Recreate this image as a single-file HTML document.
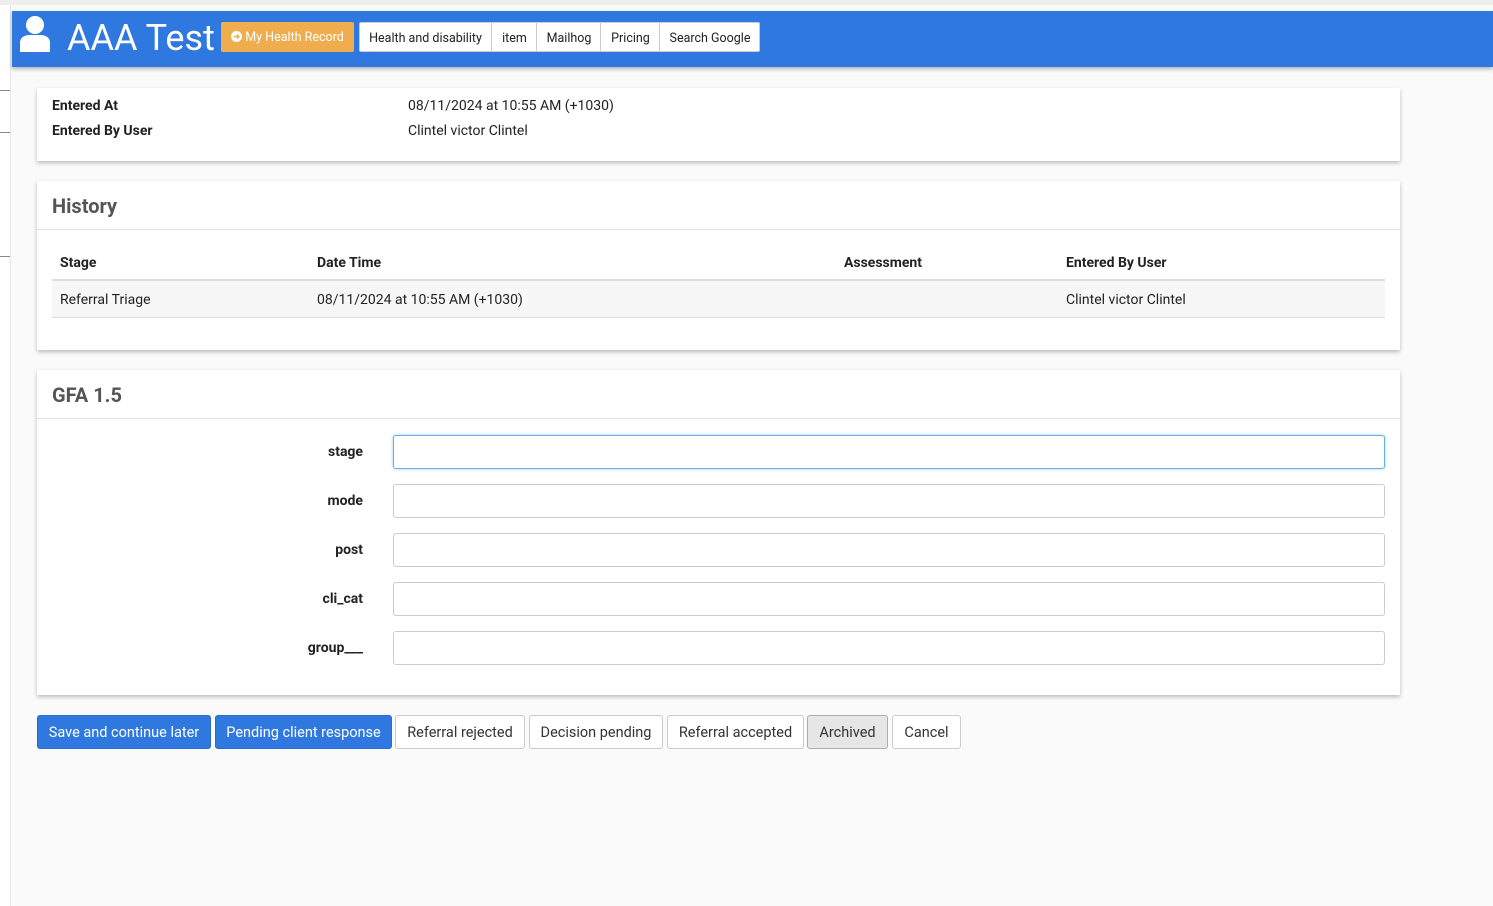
<!DOCTYPE html>
<html><head><meta charset="utf-8"><style>
*{box-sizing:border-box;margin:0;padding:0}
body{width:1493px;height:906px;background:#fafafa;font-family:"Roboto","Liberation Sans",sans-serif;color:#222;position:relative;overflow:hidden;font-size:14px}
.a{position:absolute}
.card{position:absolute;left:37px;width:1363px;background:#fff;box-shadow:0 2px 4px rgba(0,0,0,.25)}
.ttl{position:absolute;left:15px;font-size:20px;font-weight:bold;color:#555}
.hr{position:absolute;left:0;right:0;height:1px;background:#e0e0e0}
.lbl{position:absolute;width:120px;text-align:right;font-weight:bold;font-size:14px}
.inp{position:absolute;left:356px;width:992px;height:34px;border:1px solid #ccc;border-radius:3px;background:#fff}
.btn{position:absolute;top:715px;height:34px;border:1px solid #ccc;border-radius:3px;background:#fff;font-size:14.5px;line-height:34px;text-align:center;color:#333}
.nav{position:absolute;top:22px;height:30px;line-height:33px;font-size:12.5px;color:#222;text-align:center;border-left:1px solid #ccc}
</style></head><body>
<div class="a" style="left:0;top:0;width:1493px;height:5px;background:#eee"></div>
<div class="a" style="left:0;top:5px;width:11px;height:901px;background:#fff;border-right:1px solid #e6e6e6"></div>
<div class="a" style="left:0;top:90px;width:10px;height:1px;background:#888"></div>
<div class="a" style="left:0;top:132px;width:10px;height:1px;background:#888"></div>
<div class="a" style="left:0;top:256px;width:10px;height:1px;background:#888"></div>
<div class="a" style="left:12px;top:67px;width:1481px;height:21px;background:#fafafa"></div>
<div class="a" style="left:12px;top:11px;width:1481px;height:56px;background:#2f78e0;box-shadow:0 2px 4px rgba(0,0,0,.3)"></div>
<svg class="a" style="left:18px;top:15px" width="34" height="38" viewBox="0 0 34 38"><circle cx="17" cy="10" r="9" fill="#fff"/><path d="M2 37 V28 C2 22 7 20 12 20 H22 C27 20 32 22 32 28 V37 Z" fill="#fff"/></svg>
<div class="a" style="left:67px;top:16px;font-size:36px;color:#fff;line-height:44px">AAA Test</div>
<div class="a" style="left:221px;top:22px;width:133px;height:30px;background:#f0ad4e;border-radius:2px;color:#fff;font-size:12.5px;line-height:32px;text-align:center"><svg width="11" height="11" viewBox="0 0 12 12" style="vertical-align:-1px"><circle cx="6" cy="6" r="6" fill="#fff"/><path d="M3 6H8.5M6.5 3.8L8.7 6L6.5 8.2" stroke="#f0ad4e" stroke-width="1.6" fill="none"/></svg> My Health Record</div>
<div class="a" style="left:359px;top:22px;width:401px;height:30px;background:#fff;border:1px solid #ccc;border-radius:2px"></div>
<div class="nav" style="left:359px;width:133px;border-left:none">Health and disability</div>
<div class="nav" style="left:491px;width:46px">item</div>
<div class="nav" style="left:536px;width:65px">Mailhog</div>
<div class="nav" style="left:600px;width:60px">Pricing</div>
<div class="nav" style="left:659px;width:101px">Search Google</div>

<div class="card" style="top:88px;height:73px">
<div class="a" style="left:15px;top:10px;font-weight:bold">Entered At</div>
<div class="a" style="left:371px;top:10px">08/11/2024 at 10:55 AM (+1030)</div>
<div class="a" style="left:15px;top:35px;font-weight:bold">Entered By User</div>
<div class="a" style="left:371px;top:35px">Clintel victor Clintel</div>
</div>

<div class="card" style="top:181px;height:169px">
<div class="ttl" style="top:13px">History</div>
<div class="hr" style="top:48px"></div>
<div class="a" style="left:15px;top:98px;width:1333px;height:2px;background:#ddd"></div>
<div class="a" style="left:15px;top:100px;width:1333px;height:37px;background:#f7f7f7;border-bottom:1px solid #ddd"></div>
<div class="a" style="left:23px;top:74px;font-weight:bold">Stage</div>
<div class="a" style="left:280px;top:74px;font-weight:bold">Date Time</div>
<div class="a" style="left:807px;top:74px;font-weight:bold">Assessment</div>
<div class="a" style="left:1029px;top:74px;font-weight:bold">Entered By User</div>
<div class="a" style="left:23px;top:111px">Referral Triage</div>
<div class="a" style="left:280px;top:111px">08/11/2024 at 10:55 AM (+1030)</div>
<div class="a" style="left:1029px;top:111px">Clintel victor Clintel</div>
</div>

<div class="card" style="top:370px;height:325px">
<div class="ttl" style="top:13px">GFA 1.5</div>
<div class="hr" style="top:48px"></div>
<div class="lbl" style="left:206px;top:74px">stage</div>
<div class="inp" style="top:65px;border-color:#66afe9;box-shadow:0 0 3px rgba(102,175,233,.6)"></div>
<div class="lbl" style="left:206px;top:123px">mode</div>
<div class="inp" style="top:114px"></div>
<div class="lbl" style="left:206px;top:172px">post</div>
<div class="inp" style="top:163px"></div>
<div class="lbl" style="left:206px;top:221px">cli_cat</div>
<div class="inp" style="top:212px"></div>
<div class="lbl" style="left:206px;top:270px">group___</div>
<div class="inp" style="top:261px"></div>
</div>

<div class="btn" style="left:37px;width:174px;background:#2f78e0;border-color:#2a6ccb;color:#fff">Save and continue later</div>
<div class="btn" style="left:215px;width:177px;background:#2f78e0;border-color:#2a6ccb;color:#fff">Pending client response</div>
<div class="btn" style="left:395px;width:130px">Referral rejected</div>
<div class="btn" style="left:529px;width:134px">Decision pending</div>
<div class="btn" style="left:667px;width:137px">Referral accepted</div>
<div class="btn" style="left:807px;width:81px;background:#e6e6e6;border-color:#adadad">Archived</div>
<div class="btn" style="left:892px;width:69px">Cancel</div>
</body></html>
